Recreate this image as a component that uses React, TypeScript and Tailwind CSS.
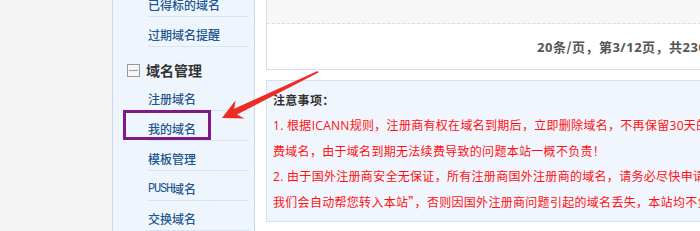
import React from "react";

const FONT = "font-['Noto_Sans_CJK_SC','Microsoft_YaHei',sans-serif]";
const LATIN = "font-['Open_Sans','Noto_Sans_CJK_SC',sans-serif]";

function NavItem({ children }: { children: React.ReactNode }) {
  return (
    <div className="ml-[35px] w-[101px] h-[30px] border-b border-[#d9e5f2] flex items-center pt-[6px] text-[12px] leading-[14px] font-medium text-[#21558f] whitespace-nowrap">
      {children}
    </div>
  );
}

export default function App() {
  return (
    <div className={`relative w-[700px] h-[231px] overflow-hidden flex bg-white ${FONT}`}>
      <div className="w-[112px] h-full bg-[#f4f4f4] shrink-0" />
      <div className="w-[143px] h-full shrink-0 border-x border-[#c8d9ee] bg-[#eef5fd] overflow-hidden">
        <div className="-mt-[13px]">
          <NavItem>已得标的域名</NavItem>
          <NavItem>过期域名提醒</NavItem>
          <div className="h-[34px] pt-[12px] flex items-center ml-[14px]">
            <div className="w-[13px] h-[13px] border border-[#9a9a9a] flex items-center justify-center bg-[#f6f6f6]">
              <div className="w-[9px] h-px bg-[#9a9a9a]" />
            </div>
            <span className="ml-[6px] text-[14px] leading-[18px] font-bold text-[#333333]">域名管理</span>
          </div>
          <NavItem>注册域名</NavItem>
          <NavItem>我的域名</NavItem>
          <NavItem>模板管理</NavItem>
          <NavItem>
            <span className="font-['Liberation_Mono',monospace] text-[12px] tracking-[-1.2px] font-normal">PUSH</span>
            <span>域名</span>
          </NavItem>
          <NavItem>交换域名</NavItem>
        </div>
      </div>
      <div className="w-[11px] shrink-0" />
      <div className="flex flex-col min-w-0 shrink-0">
        <div className="w-[600px] border-l border-b border-[#cfdff3]">
          <div className="h-[24px] bg-[#f7f7f7] border-b border-dashed border-[#dcdcdc]" />
          <div className="h-[45px] flex items-center pl-[270px] text-[13px] leading-[16px] font-bold text-[#555555] tracking-[0.5px] whitespace-nowrap">
            <span className={LATIN}>20</span>条/页，第<span className={LATIN}>3/12</span>页，共<span className={LATIN}>230</span>条记录
          </div>
        </div>
        <div className="h-[10px]" />
        <div className="w-[600px] h-[142px] border border-[#d2e1f4] bg-[#f1f6fe] pl-[6px] pt-[6px] text-[12px] leading-[25px] tracking-[0.3px] whitespace-nowrap">
          <div className="font-bold text-[#333333]">注意事项：</div>
          <div className="text-[#ff1010]">
            <span className={LATIN}>1. </span>根据<span className={LATIN}>ICANN</span>规则，注册商有权在域名到期后，立即删除域名，不再保留<span className={LATIN}>30</span>天的赎回期，请在到期前及时续
          </div>
          <div className="text-[#ff1010]">费域名，由于域名到期无法续费导致的问题本站一概不负责！</div>
          <div className="text-[#ff1010]">
            <span className={LATIN}>2. </span>由于国外注册商安全无保证，所有注册商国外注册商的域名，请务必尽快申请转入本站，“申请后
          </div>
          <div className="text-[#ff1010]">我们会自动帮您转入本站”，否则因国外注册商问题引起的域名丢失，本站均不负责！</div>
        </div>
      </div>

      <div className="absolute left-[123px] top-[110px] w-[88px] h-[30px] border-[3px] border-[#7d1a87] pointer-events-none" />

      <svg className="absolute left-0 top-0 pointer-events-none" width="700" height="231" viewBox="0 0 700 231">
        <polygon
          points="222,118 244.5,118.5 237,114.4 318.5,72.5 317.5,71 234.2,108.8 235.6,100.3"
          fill="#ee2b24"
        />
      </svg>
    </div>
  );
}
